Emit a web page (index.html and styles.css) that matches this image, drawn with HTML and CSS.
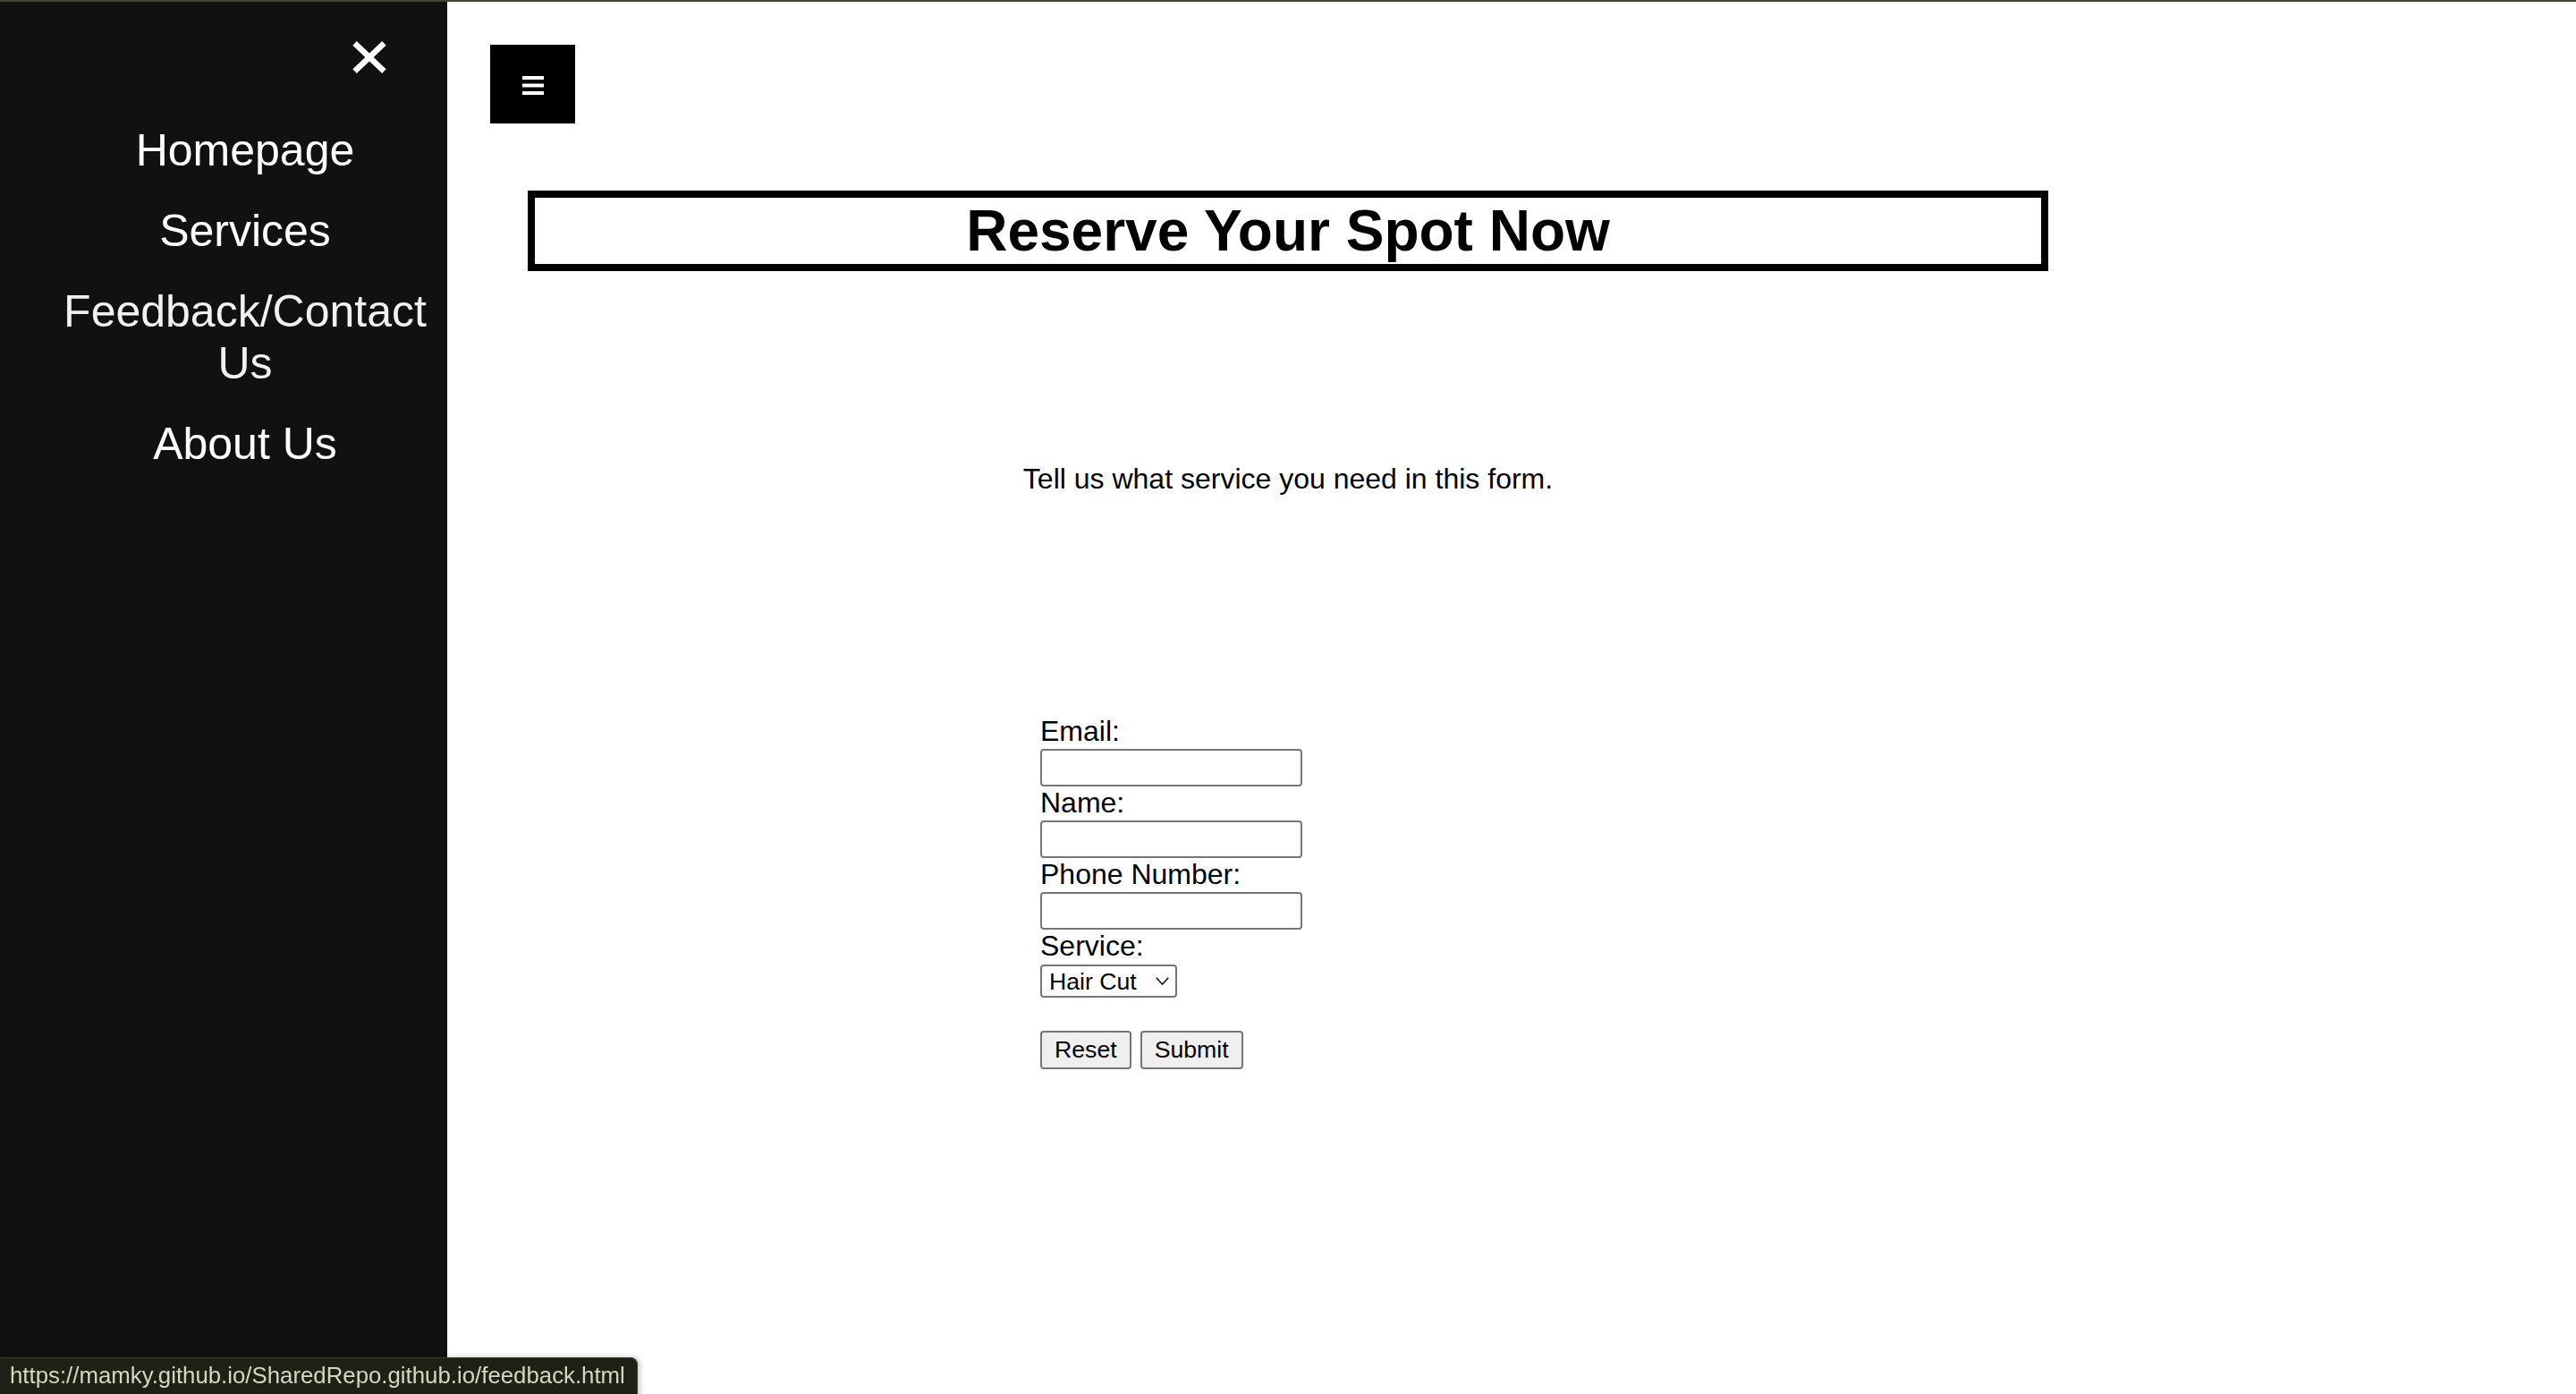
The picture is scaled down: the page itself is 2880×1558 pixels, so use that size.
FILE: index.html
```html
<!DOCTYPE html>
<html lang="en">
<head>
<meta charset="utf-8">
<title>Feedback / Contact Us</title>
<link rel="stylesheet" href="styles.css">
</head>
<body>
<nav class="sidenav">
  <a class="closebtn" href="#" aria-label="Close menu">
    <svg class="close-icon" viewBox="0 0 38 36" width="38" height="36" aria-hidden="true">
      <line x1="2.6" y1="2.4" x2="35.4" y2="33.6" />
      <line x1="35.4" y1="2.4" x2="2.6" y2="33.6" />
    </svg>
  </a>
  <a class="navlink" href="#">Homepage</a>
  <a class="navlink" href="#">Services</a>
  <a class="navlink navlink-hover" href="#">Feedback/Contact Us</a>
  <a class="navlink" href="#">About Us</a>
</nav>

<div class="page">
  <header class="topbar">
    <button class="menu-btn" type="button" aria-label="Open menu">
      <svg class="menu-icon" viewBox="0 0 24 21" width="24" height="21" aria-hidden="true">
        <rect x="0" y="0" width="24" height="4" />
        <rect x="0" y="8.5" width="24" height="4" />
        <rect x="0" y="17" width="24" height="4" />
      </svg>
    </button>
  </header>

  <h1 class="title">Reserve Your Spot Now</h1>

  <p class="intro">Tell us what service you need in this form.</p>

  <form class="booking">
    <label class="field-label" for="email">Email:</label>
    <input class="field" id="email" type="email">
    <label class="field-label" for="name">Name:</label>
    <input class="field" id="name" type="text">
    <label class="field-label" for="phone">Phone Number:</label>
    <input class="field" id="phone" type="tel">
    <label class="field-label" for="service">Service:</label>
    <div class="select-wrap">
      <select class="select" id="service">
        <option>Hair Cut</option>
        <option>Shave</option>
        <option>Beard Trim</option>
      </select>
      <svg class="chevron" viewBox="0 0 15 9" width="15" height="9" aria-hidden="true">
        <polyline points="0.8,0.8 7.5,8 14.2,0.8" />
      </svg>
    </div>
    <div class="actions">
      <button class="btn" type="reset">Reset</button>
      <button class="btn" type="submit">Submit</button>
    </div>
  </form>
</div>

<div class="status">https://mamky.github.io/SharedRepo.github.io/feedback.html</div>
</body>
</html>
```

FILE: styles.css
```css
html, body {
  margin: 0;
  padding: 0;
}

body {
  background: #ffffff;
  color: #000000;
  font-family: "Liberation Sans", Arial, Helvetica, sans-serif;
  border-top: 2px solid #45473a;
  min-height: 1556px;
}

/* Side navigation (overlay menu) */
.sidenav {
  position: fixed;
  top: 2px;
  left: 0;
  bottom: 0;
  width: 500px;
  background: #111111;
  padding-top: 121px;
  box-sizing: border-box;
  z-index: 2;
}

.closebtn {
  position: absolute;
  left: 394px;
  top: 44px;
  width: 38px;
  height: 36px;
  display: block;
}

.close-icon {
  display: block;
  stroke: #ffffff;
  stroke-width: 6.4;
  stroke-linecap: butt;
}

.navlink {
  display: block;
  padding: 16px 16px 16px 64px;
  font-size: 50px;
  line-height: 58px;
  color: #ffffff;
  text-decoration: none;
  text-align: center;
}

.navlink-hover {
  color: #f1f1f1;
}

/* Main page */
.page {
  padding-top: 48px;
}

.topbar {
  display: flex;
  padding-left: 548px;
}

.menu-btn {
  width: 95px;
  height: 88px;
  margin: 0;
  padding: 3px 0 0;
  border: 0;
  background: #000000;
  display: flex;
  align-items: center;
  justify-content: center;
  box-sizing: border-box;
}

.menu-icon {
  display: block;
  fill: #ffffff;
}

.title {
  box-sizing: border-box;
  width: 1700px;
  margin: 75px auto 0;
  border: 8px solid #000000;
  font-size: 64px;
  line-height: 74px;
  font-weight: bold;
  text-align: center;
}

.intro {
  margin: 214px 0 0;
  font-size: 32px;
  line-height: 37px;
  text-align: center;
}

.booking {
  width: 554px;
  margin: 245px auto 0;
}

.field-label {
  display: block;
  font-size: 32px;
  line-height: 37px;
}

.field {
  display: block;
  box-sizing: border-box;
  width: 293px;
  height: 42px;
  margin: 1px 0 0;
  border: 2px solid #767676;
  border-radius: 4px;
  background: #ffffff;
  font-family: inherit;
  font-size: 26.67px;
}

.select-wrap {
  position: relative;
  width: 153px;
  height: 37px;
  margin-top: 2px;
}

.select {
  -webkit-appearance: none;
  appearance: none;
  display: block;
  box-sizing: border-box;
  width: 153px;
  height: 37px;
  margin: 0;
  padding: 0 0 0 8px;
  border: 2px solid #767676;
  border-radius: 4px;
  background: #ffffff;
  color: #000000;
  font-family: inherit;
  font-size: 26.67px;
}

.chevron {
  position: absolute;
  left: 129px;
  top: 14px;
  fill: none;
  stroke: #111111;
  stroke-width: 1.6;
  pointer-events: none;
}

.actions {
  display: flex;
  gap: 10px;
  margin-top: 37px;
}

.btn {
  box-sizing: border-box;
  height: 43px;
  margin: 0;
  padding: 0 14px;
  border: 2px solid #767676;
  border-radius: 4px;
  background: #efefef;
  color: #000000;
  font-family: inherit;
  font-size: 26.67px;
}

/* Browser status tooltip */
.status {
  position: fixed;
  left: 0;
  bottom: -6px;
  width: 713px;
  height: 47px;
  box-sizing: border-box;
  padding: 4px 10px 0 11px;
  background: #1f2117;
  border: 1px solid #3b3d31;
  border-left: 0;
  border-top-right-radius: 8px;
  box-shadow: 2px 0 6px rgba(0, 0, 0, 0.25);
  color: #d4d7bf;
  font-size: 25.8px;
  line-height: 30px;
  white-space: nowrap;
  z-index: 3;
}
```
